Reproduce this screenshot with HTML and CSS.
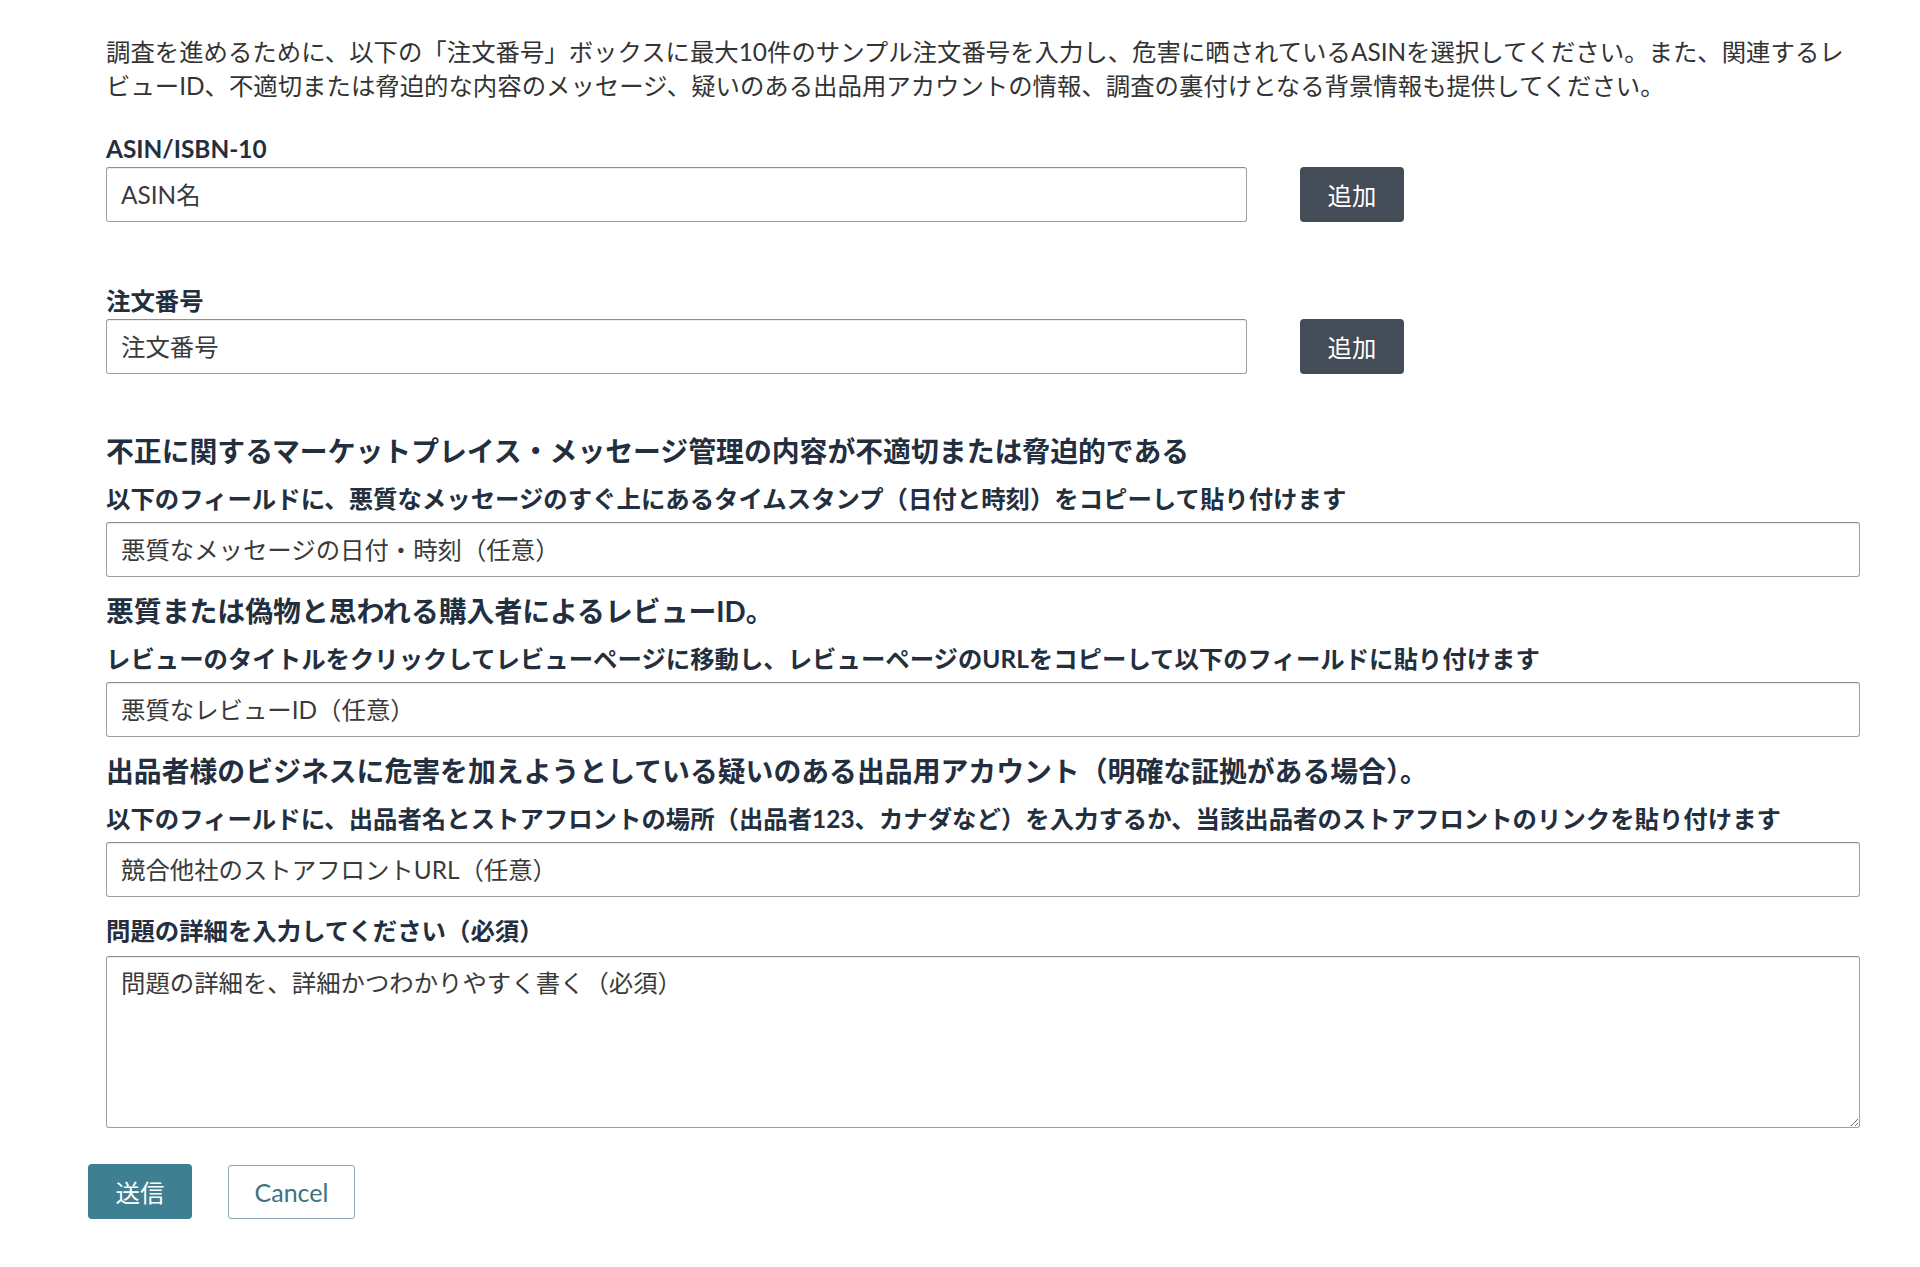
FILE: index.html
```html
<!DOCTYPE html>
<html lang="ja">
<head>
<meta charset="utf-8">
<title>調査フォーム</title>
<link rel="stylesheet" href="styles.css">
</head>
<body>
<div class="page">
  <div class="form">
    <p class="intro">調査を進めるために、以下の「注文番号」ボックスに最大10件のサンプル注文番号を入力し、危害に晒されているASINを選択してください。また、関連するレビューID、不適切または脅迫的な内容のメッセージ、疑いのある出品用アカウントの情報、調査の裏付けとなる背景情報も提供してください。</p>

    <div class="field field-asin">
      <label class="label">ASIN/ISBN-10</label>
      <div class="add-row">
        <input class="input input-short" type="text" placeholder="ASIN名">
        <button class="btn-add" type="button">追加</button>
      </div>
    </div>

    <div class="field field-order">
      <label class="label">注文番号</label>
      <div class="add-row">
        <input class="input input-short" type="text" placeholder="注文番号">
        <button class="btn-add" type="button">追加</button>
      </div>
    </div>

    <div class="section section-first">
      <h2 class="heading">不正に関するマーケットプレイス・メッセージ管理の内容が不適切または脅迫的である</h2>
      <label class="label sub">以下のフィールドに、悪質なメッセージのすぐ上にあるタイムスタンプ（日付と時刻）をコピーして貼り付けます</label>
      <input class="input input-wide" type="text" placeholder="悪質なメッセージの日付・時刻（任意）">
    </div>

    <div class="section">
      <h2 class="heading">悪質または偽物と思われる購入者によるレビューID。</h2>
      <label class="label sub">レビューのタイトルをクリックしてレビューページに移動し、レビューページのURLをコピーして以下のフィールドに貼り付けます</label>
      <input class="input input-wide" type="text" placeholder="悪質なレビューID（任意）">
    </div>

    <div class="section">
      <h2 class="heading">出品者様のビジネスに危害を加えようとしている疑いのある出品用アカウント（明確な証拠がある場合）。</h2>
      <label class="label sub">以下のフィールドに、出品者名とストアフロントの場所（出品者123、カナダなど）を入力するか、当該出品者のストアフロントのリンクを貼り付けます</label>
      <input class="input input-wide" type="text" placeholder="競合他社のストアフロントURL（任意）">
    </div>

    <div class="detail">
      <label class="label">問題の詳細を入力してください（必須）</label>
      <textarea class="textarea" placeholder="問題の詳細を、詳細かつわかりやすく書く（必須）"></textarea>
    </div>
  </div>

  <div class="actions">
    <button class="btn-submit" type="button">送信</button>
    <button class="btn-cancel" type="button">Cancel</button>
  </div>
</div>
</body>
</html>
```

FILE: styles.css
```css
* {
  box-sizing: border-box;
}

html, body {
  margin: 0;
  padding: 0;
  background: #ffffff;
}

body {
  font-family: "Lato", "Noto Sans CJK JP", sans-serif;
  color: #333333;
  font-size: 24.4px;
}

.page {
  padding: 35px 0 40px 88px;
}

.form {
  margin-left: 18px;
  width: 1754px;
}

.intro {
  margin: 0;
  font-size: 24.4px;
  line-height: 34px;
  color: #333333;
}

.field {
  display: flex;
  flex-direction: column;
}

.field-asin {
  margin-top: 28px;
}

.field-order {
  margin-top: 61px;
}

.label {
  display: block;
  font-size: 24.4px;
  font-weight: 700;
  line-height: 36px;
  color: #232f3e;
}

.add-row {
  display: flex;
  align-items: center;
  gap: 53px;
}

.input {
  display: block;
  height: 55px;
  padding: 0 14px;
  border: 1px solid #a0a0a0;
  border-top-color: #8e8e8e;
  border-radius: 3px;
  box-shadow: 0 1px 0 rgba(0, 0, 0, 0.07) inset;
  font-family: "Lato", "Noto Sans CJK JP", sans-serif;
  font-size: 24.4px;
  color: #333333;
  background: #ffffff;
  outline: none;
}

.input::placeholder,
.textarea::placeholder {
  color: #3a3a3a;
  opacity: 1;
}

.input-short {
  width: 1141px;
}

.input-wide {
  width: 1754px;
}

.btn-add {
  width: 104px;
  height: 55px;
  border: none;
  border-radius: 4px;
  background: #434c57;
  color: #ffffff;
  font-family: "Lato", "Noto Sans CJK JP", sans-serif;
  font-size: 24.4px;
  padding: 0;
}

.section {
  margin-top: 17px;
}

.section-first {
  margin-top: 60px;
}

.heading {
  margin: 0;
  font-size: 27.85px;
  font-weight: 700;
  line-height: 36px;
  color: #232f3e;
}

.sub {
  margin-top: 11px;
  margin-bottom: 5px;
}

.detail {
  margin-top: 16px;
}

.textarea {
  display: block;
  margin-top: 7px;
  width: 1754px;
  height: 172px;
  padding: 8px 14px;
  border: 1px solid #a0a0a0;
  border-top-color: #8e8e8e;
  border-radius: 3px;
  box-shadow: 0 1px 0 rgba(0, 0, 0, 0.07) inset;
  font-family: "Lato", "Noto Sans CJK JP", sans-serif;
  font-size: 24.4px;
  line-height: 36px;
  color: #333333;
  background: #ffffff;
  outline: none;
}

.actions {
  display: flex;
  align-items: center;
  gap: 36px;
  margin-top: 36px;
}

.btn-submit {
  width: 104px;
  height: 55px;
  border: none;
  border-radius: 4px;
  background: #3e8092;
  color: #ffffff;
  font-family: "Lato", "Noto Sans CJK JP", sans-serif;
  font-size: 24.4px;
  padding: 0;
}

.btn-cancel {
  width: 127px;
  height: 54px;
  border: 1.5px solid #8fa9b0;
  border-radius: 3px;
  background: #ffffff;
  color: #3c7383;
  font-family: "Lato", "Noto Sans CJK JP", sans-serif;
  font-size: 25px;
  padding: 0;
}
```
